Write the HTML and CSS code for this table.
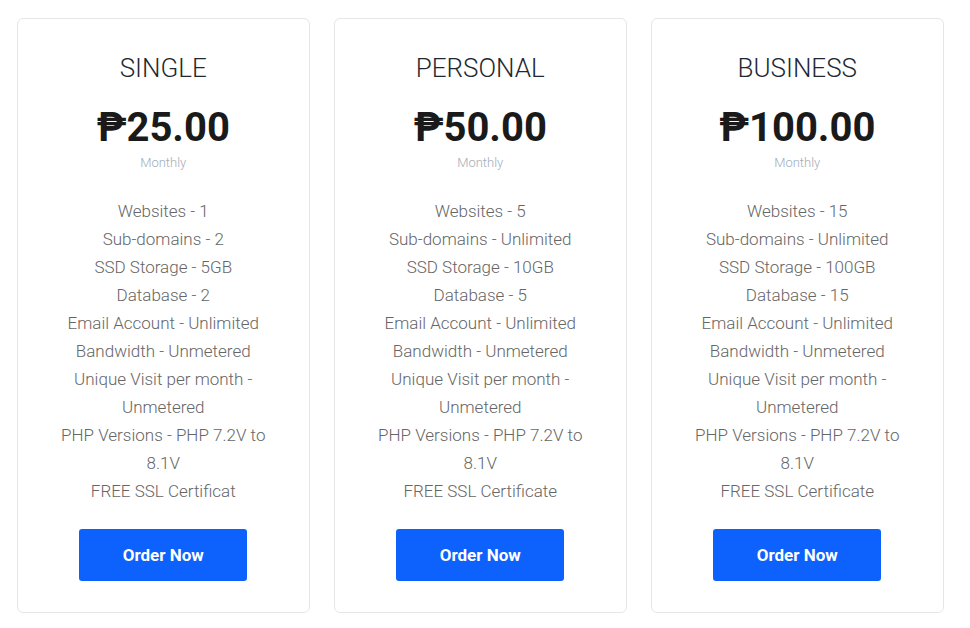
FILE: index.html
```html
<!DOCTYPE html>
<html lang="en">
<head>
    <meta charset="UTF-8">
    <meta name="viewport" content="width=device-width, initial-scale=1.0">
    <title>Hosting Plans</title>
    <link rel="stylesheet" href="styles.css">
</head>
<body>
    <div class="plans">
        <div class="plan">
            <h2 class="plan-name">SINGLE</h2>
            <div class="plan-price">₱25.00</div>
            <div class="plan-period">Monthly</div>
            <ul class="plan-features">
                <li>Websites - 1</li>
                <li>Sub-domains - 2</li>
                <li>SSD Storage - 5GB</li>
                <li>Database - 2</li>
                <li>Email Account - Unlimited</li>
                <li>Bandwidth - Unmetered</li>
                <li>Unique Visit per month - Unmetered</li>
                <li>PHP Versions - PHP 7.2V to 8.1V</li>
                <li>FREE SSL Certificat</li>
            </ul>
            <a href="#" class="order-btn">Order Now</a>
        </div>

        <div class="plan">
            <h2 class="plan-name">PERSONAL</h2>
            <div class="plan-price">₱50.00</div>
            <div class="plan-period">Monthly</div>
            <ul class="plan-features">
                <li>Websites - 5</li>
                <li>Sub-domains - Unlimited</li>
                <li>SSD Storage - 10GB</li>
                <li>Database - 5</li>
                <li>Email Account - Unlimited</li>
                <li>Bandwidth - Unmetered</li>
                <li>Unique Visit per month - Unmetered</li>
                <li>PHP Versions - PHP 7.2V to 8.1V</li>
                <li>FREE SSL Certificate</li>
            </ul>
            <a href="#" class="order-btn">Order Now</a>
        </div>

        <div class="plan">
            <h2 class="plan-name">BUSINESS</h2>
            <div class="plan-price">₱100.00</div>
            <div class="plan-period">Monthly</div>
            <ul class="plan-features">
                <li>Websites - 15</li>
                <li>Sub-domains - Unlimited</li>
                <li>SSD Storage - 100GB</li>
                <li>Database - 15</li>
                <li>Email Account - Unlimited</li>
                <li>Bandwidth - Unmetered</li>
                <li>Unique Visit per month - Unmetered</li>
                <li>PHP Versions - PHP 7.2V to 8.1V</li>
                <li>FREE SSL Certificate</li>
            </ul>
            <a href="#" class="order-btn">Order Now</a>
        </div>
    </div>
</body>
</html>
```

FILE: styles.css
```css
body { margin: 0; background: #fff; font-family: Roboto, "DejaVu Sans", sans-serif; }
.plans { display: flex; gap: 24.5px; padding: 18px 0 0 17px; }
.plan { width: 292.5px; box-sizing: border-box; border: 1px solid #e6e6e6; border-radius: 6px; padding: 32px 30px 31px; text-align: center; display: flex; flex-direction: column; align-items: center; }
.plan-name { margin: 0; font-size: 26px; line-height: 34px; font-weight: 300; color: #1e2833; }
.plan-price { margin-top: 19px; font-size: 40px; line-height: 48px; font-weight: 700; color: #1a1a1a; }
.plan-period { margin-top: 2px; font-size: 13px; line-height: 18px; font-weight: 300; color: #a3adb8; }
.plan-features { list-style: none; margin: 25px 0 0; padding: 0; max-width: 220px; font-size: 17px; line-height: 28px; font-weight: 300; color: #666; }
.order-btn { margin-top: 24px; width: 168px; height: 52px; display: flex; align-items: center; justify-content: center; background: #0d61fc; color: #fff; font-size: 17px; font-weight: 700; text-decoration: none; border-radius: 3px; }
```
